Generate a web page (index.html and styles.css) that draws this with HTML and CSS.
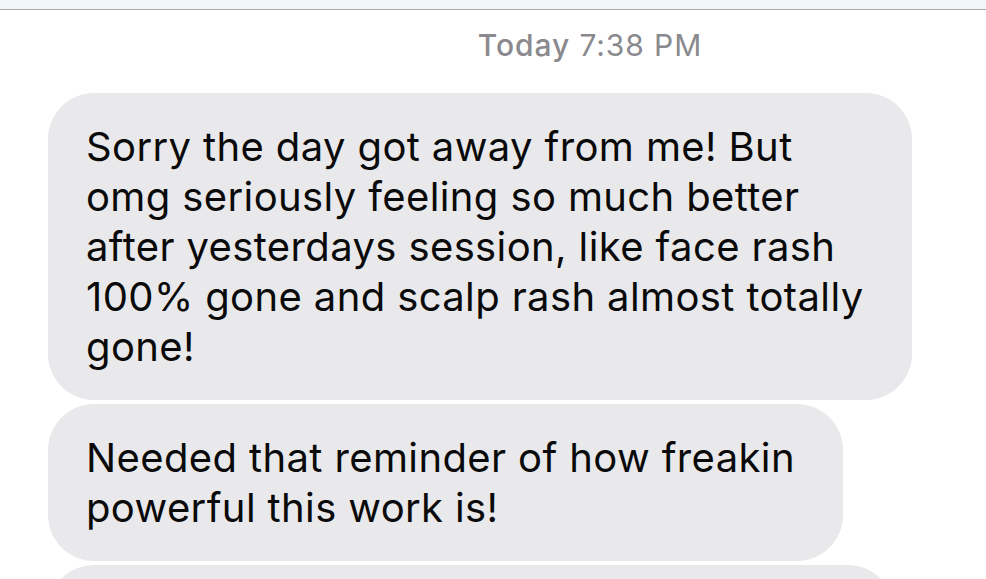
FILE: index.html
```html
<!DOCTYPE html>
<html>
<head>
<meta charset="utf-8">
<link rel="stylesheet" href="styles.css">
</head>
<body>
<div class="topbar"></div>
<div class="stamp"><span class="day">Today</span> 7:38 PM</div>
<div class="thread">
  <div class="bubble">Sorry the day got away from me! But<br>omg seriously feeling so much better<br>after yesterdays session, like face rash<br>100% gone and scalp rash almost totally<br>gone!</div>
  <div class="bubble">Needed that reminder of how freakin<br>powerful this work is!</div>
  <div class="bubble bubble-peek"></div>
</div>
</body>
</html>
```
FILE: styles.css
```css
html, body {
  margin: 0;
  padding: 0;
  background: #ffffff;
  overflow: hidden;
  height: 579px;
}
body {
  font-family: Inter, "Liberation Sans", sans-serif;
}
.topbar {
  height: 9px;
  background: #f4f5f8;
  border-bottom: 1px solid #a9a9a9;
}
.stamp {
  padding-left: 194px;
  text-align: center;
  margin-top: 17px;
  font-size: 30px;
  line-height: 36px;
  letter-spacing: 0.9px;
  color: #8a8a8e;
}
.stamp .day {
  font-weight: 500;
}
.thread {
  display: flex;
  flex-direction: column;
  align-items: flex-start;
  gap: 4px;
  padding-left: 48px;
  margin-top: 30px;
}
.bubble {
  background: #e9e9eb;
  color: #0a0a0a;
  font-size: 40px;
  line-height: 50px;
  letter-spacing: 0.38px;
  padding: 29px 48px 28px 38px;
  border-radius: 46px;
  white-space: nowrap;
}
.bubble-peek {
  width: 760px;
  height: 50px;
}
```
